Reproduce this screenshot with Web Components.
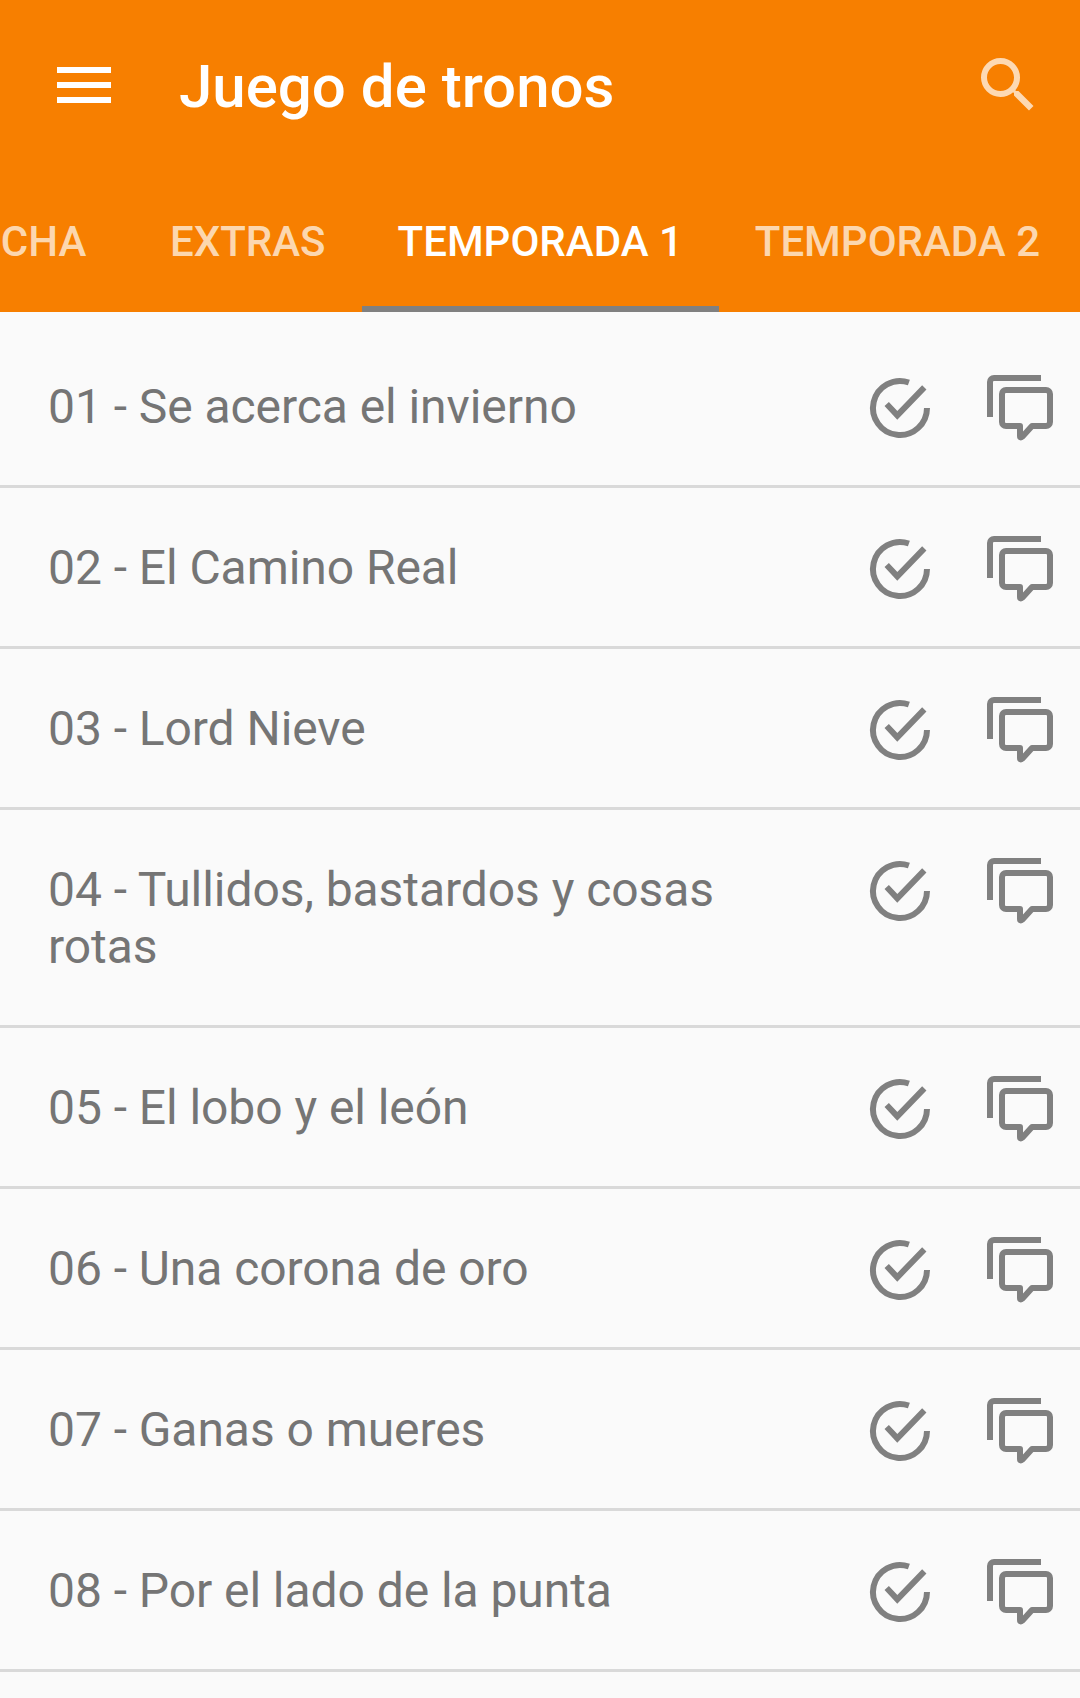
<!DOCTYPE html>
<html>
<head>
<meta charset="utf-8">
<style>
  html, body { margin: 0; height: 1698px; overflow: hidden; background: #fafafa; }
  body { font-family: Roboto, "Liberation Sans", sans-serif; }
</style>
</head>
<body>
<app-bar heading="Juego de tronos"></app-bar>
<tab-strip>
  <tab-item>Ficha</tab-item>
  <tab-item>Extras</tab-item>
  <tab-item active>Temporada 1</tab-item>
  <tab-item>Temporada 2</tab-item>
</tab-strip>
<episode-list>
  <episode-row>01 - Se acerca el invierno</episode-row>
  <episode-row>02 - El Camino Real</episode-row>
  <episode-row>03 - Lord Nieve</episode-row>
  <episode-row>04 - Tullidos, bastardos y cosas rotas</episode-row>
  <episode-row>05 - El lobo y el león</episode-row>
  <episode-row>06 - Una corona de oro</episode-row>
  <episode-row>07 - Ganas o mueres</episode-row>
  <episode-row>08 - Por el lado de la punta</episode-row>
</episode-list>
<script>
class AppBar extends HTMLElement {
  connectedCallback() {
    this.attachShadow({ mode: 'open' }).innerHTML = `
<style>
  :host { display: flex; align-items: center; height: 168px; padding: 2px 0 0 57px; box-sizing: border-box; background: #f77f00; color: #fff; }
  .menu { width: 54px; height: 36px; flex: none; display: block; }
  h1 { flex: 1; margin: 0 0 0 68px; padding-top: 4px; font: 500 60px/72px Roboto, sans-serif; }
  .search { width: 72px; height: 72px; flex: none; margin: 0 36px 0 0; fill: rgba(255,255,255,.7); }
</style>
<svg class="menu" viewBox="0 0 54 36"><path fill="#fff" d="M0 0h54v6H0zM0 15h54v6H0zM0 30h54v6H0z"/></svg>
<h1>${this.getAttribute('heading')}</h1>
<svg class="search" viewBox="0 0 24 24"><path d="M15.5 14h-.79l-.28-.27A6.47 6.47 0 0 0 16 9.5 6.5 6.5 0 1 0 9.5 16c1.61 0 3.09-.59 4.23-1.57l.27.28v.79l5 4.99L20.49 19l-4.99-5zm-6 0C7.01 14 5 11.99 5 9.5S7.01 5 9.5 5 14 7.01 14 9.5 11.99 14 9.5 14z"/></svg>`;
  }
}

class TabStrip extends HTMLElement {
  connectedCallback() {
    this.attachShadow({ mode: 'open' }).innerHTML = `
<style>
  :host { display: block; height: 144px; overflow: hidden; background: #f77f00; }
  /* strip is scrolled: first tab runs off the left edge */
  .track { display: flex; width: max-content; margin-left: -82px; }
</style>
<div class="track"><slot></slot></div>`;
  }
}

class TabItem extends HTMLElement {
  connectedCallback() {
    this.attachShadow({ mode: 'open' }).innerHTML = `
<style>
  :host { display: flex; align-items: center; justify-content: center; box-sizing: border-box; min-width: 216px; height: 144px; padding: 10px 36px 0; border-bottom: 6px solid transparent; font: 500 42px/48px Roboto, sans-serif; text-transform: uppercase; color: rgba(255,255,255,.7); white-space: nowrap; }
  :host([active]) { color: #fff; border-bottom-color: #808080; }
</style>
<slot></slot>`;
  }
}

class EpisodeList extends HTMLElement {
  connectedCallback() {
    this.attachShadow({ mode: 'open' }).innerHTML = `
<style>
  :host { display: block; padding-top: 15px; background: #fafafa; }
</style>
<slot></slot>`;
  }
}

class EpisodeRow extends HTMLElement {
  connectedCallback() {
    this.attachShadow({ mode: 'open' }).innerHTML = `
<style>
  :host { display: flex; align-items: flex-start; padding: 0 24px 0 48px; border-bottom: 3px solid #d9d9d9; color: #757575; }
  .name { flex: 1; padding: 51px 60px 50px 0; font: 400 48px/57px Roboto, sans-serif; letter-spacing: -.06px; }
  .icons { display: flex; gap: 48px; padding-top: 45px; flex: none; }
  svg { width: 72px; height: 72px; display: block; fill: none; stroke: #808080; stroke-width: 6; }
</style>
<div class="name"><slot></slot></div>
<div class="icons">
  <svg viewBox="0 0 72 72"><path d="M63 36A27 27 0 1 1 44.9 10.5"/><path d="M22.700 32L33.300 43.300L60.300 15.300"/></svg>
  <svg viewBox="0 0 72 72"><path d="M57 6H10a4 4 0 0 0-4 4V45"/><path stroke-linejoin="round" d="M22 18H62a4 4 0 0 1 4 4V50a4 4 0 0 1-4 4H48L38.500 64.500Q36 66.500 36 64V54H22a4 4 0 0 1-4-4V22a4 4 0 0 1 4-4Z"/></svg>
</div>`;
  }
}

customElements.define('app-bar', AppBar);
customElements.define('tab-strip', TabStrip);
customElements.define('tab-item', TabItem);
customElements.define('episode-list', EpisodeList);
customElements.define('episode-row', EpisodeRow);
</script>
</body>
</html>
